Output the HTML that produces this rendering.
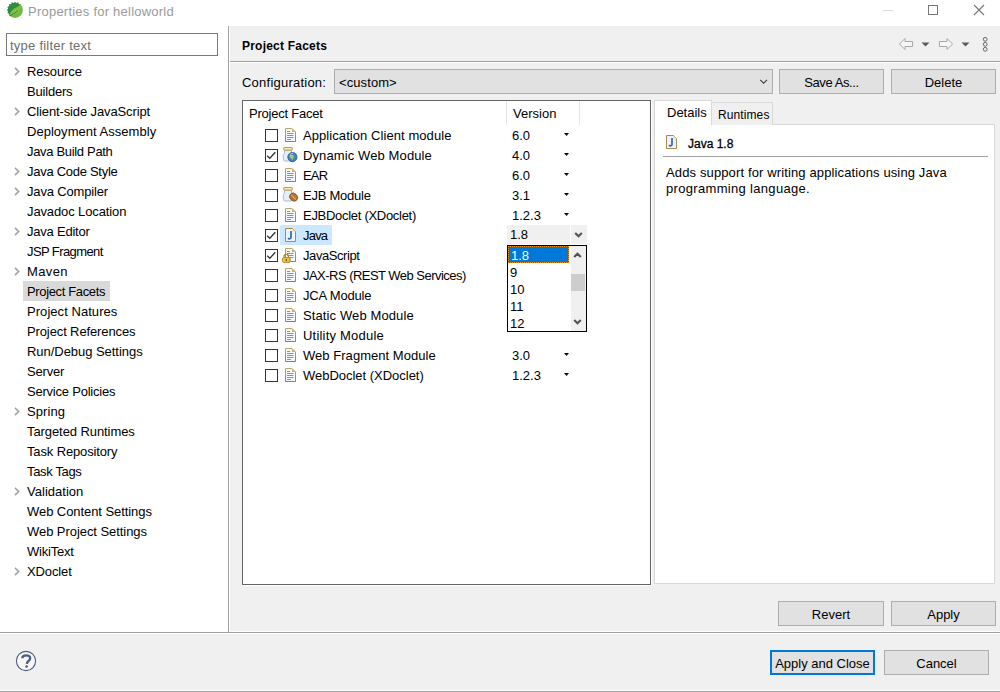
<!DOCTYPE html>
<html><head><meta charset="utf-8">
<style>
*{box-sizing:border-box;margin:0;padding:0}
html,body{width:1000px;height:692px;overflow:hidden;background:#f0f0f0;font-family:"Liberation Sans",sans-serif;color:#000}
.a{position:absolute}
.t{position:absolute;font-size:13px;line-height:16px;white-space:nowrap}
.b{font-weight:bold;font-size:12px}
.btn{position:absolute;background:#e1e1e1;border:1px solid #adadad}
.btn span{position:absolute;left:0;right:0;text-align:center;font-size:13px;line-height:16px;white-space:nowrap}
svg{position:absolute;overflow:visible}
</style></head><body>
<svg width="0" height="0" style="position:absolute"><defs><linearGradient id="docg" x1="0" y1="0" x2="0" y2="1"><stop offset="0" stop-color="#bca66a"/><stop offset="1" stop-color="#6e80ac"/></linearGradient></defs></svg>
<div class="a" style="left:0px;top:0px;width:1000px;height:26px;background:#fff;"></div>
<svg style="left:7px;top:2px" width="16" height="16" viewBox="0 0 16 16">
<circle cx="8" cy="8" r="7.9" fill="#74b843"/>
<path d="M2.4 13.6 A7.9 7.9 0 0 1 13.6 2.4 C11 4.5 9 5.5 7 6.5 C4.8 7.8 3.3 10 2.4 13.6 Z" fill="#2f8c3e"/>
<path d="M3 13.8 C3.5 9.5 7 7 13.8 4.2 C13.5 9 10 13 4 13.6 Z" fill="#7cc24c"/>
<path d="M2.8 13.8 C6 12.2 8.5 11 11 8.3" fill="none" stroke="#2a7a38" stroke-width="0.9"/>
<g fill="#fff"><circle cx="1.20" cy="12.59" r="1.05"/><circle cx="-0.05" cy="9.56" r="1.05"/><circle cx="-0.05" cy="6.44" r="1.05"/><circle cx="1.20" cy="3.41" r="1.05"/><circle cx="3.41" cy="1.20" r="1.05"/><circle cx="6.44" cy="-0.05" r="1.05"/><circle cx="9.56" cy="-0.05" r="1.05"/><circle cx="12.59" cy="1.20" r="1.05"/></g>
</svg>
<div class="t" style="left:28px;top:4px;letter-spacing:0.23px;color:#9a9a9a">Properties for helloworld</div>
<div class="a" style="left:883px;top:10px;width:10px;height:1px;background:#d8d8d8;"></div>
<div class="a" style="left:928px;top:5px;width:10px;height:10px;border:1px solid #767676"></div>
<svg style="left:974px;top:5px" width="10" height="10" viewBox="0 0 10 10"><path d="M0 0L10 10M10 0L0 10" stroke="#767676" stroke-width="1.1"/></svg>
<div class="a" style="left:0px;top:26px;width:228px;height:606px;background:#fff;"></div>
<div class="a" style="left:228px;top:26px;width:1px;height:606px;background:#a0a0a0;"></div>
<div class="a" style="left:229px;top:26px;width:1px;height:606px;background:#fff;"></div>
<div class="a" style="left:6px;top:33px;width:212px;height:23px;border:1px solid #7a7a7a;background:#fff"></div>
<div class="t" style="left:10px;top:38px;letter-spacing:0.24px;color:#6d6d6d">type filter text</div>
<svg style="left:14px;top:67px" width="6" height="10" viewBox="0 0 6 10"><path d="M1 0.9L4.6 4.5L1 8.1" fill="none" stroke="#a6a6a6" stroke-width="1.7"/></svg>
<div class="t" style="left:27px;top:64px;letter-spacing:-0.10px;">Resource</div>
<div class="t" style="left:27px;top:84px;letter-spacing:-0.20px;">Builders</div>
<svg style="left:14px;top:107px" width="6" height="10" viewBox="0 0 6 10"><path d="M1 0.9L4.6 4.5L1 8.1" fill="none" stroke="#a6a6a6" stroke-width="1.7"/></svg>
<div class="t" style="left:27px;top:104px;letter-spacing:-0.12px;">Client-side JavaScript</div>
<div class="t" style="left:27px;top:124px;letter-spacing:0.03px;">Deployment Assembly</div>
<div class="t" style="left:27px;top:144px;letter-spacing:-0.32px;">Java Build Path</div>
<svg style="left:14px;top:167px" width="6" height="10" viewBox="0 0 6 10"><path d="M1 0.9L4.6 4.5L1 8.1" fill="none" stroke="#a6a6a6" stroke-width="1.7"/></svg>
<div class="t" style="left:27px;top:164px;letter-spacing:-0.28px;">Java Code Style</div>
<svg style="left:14px;top:187px" width="6" height="10" viewBox="0 0 6 10"><path d="M1 0.9L4.6 4.5L1 8.1" fill="none" stroke="#a6a6a6" stroke-width="1.7"/></svg>
<div class="t" style="left:27px;top:184px;letter-spacing:-0.17px;">Java Compiler</div>
<div class="t" style="left:27px;top:204px;letter-spacing:-0.12px;">Javadoc Location</div>
<svg style="left:14px;top:227px" width="6" height="10" viewBox="0 0 6 10"><path d="M1 0.9L4.6 4.5L1 8.1" fill="none" stroke="#a6a6a6" stroke-width="1.7"/></svg>
<div class="t" style="left:27px;top:224px;letter-spacing:-0.22px;">Java Editor</div>
<div class="t" style="left:27px;top:244px;letter-spacing:-0.59px;">JSP Fragment</div>
<svg style="left:14px;top:267px" width="6" height="10" viewBox="0 0 6 10"><path d="M1 0.9L4.6 4.5L1 8.1" fill="none" stroke="#a6a6a6" stroke-width="1.7"/></svg>
<div class="t" style="left:27px;top:264px;letter-spacing:0.38px;">Maven</div>
<div class="a" style="left:23px;top:281px;width:87px;height:20px;background:#d9d9d9;"></div>
<div class="t" style="left:27px;top:284px;letter-spacing:-0.36px;">Project Facets</div>
<div class="t" style="left:27px;top:304px;letter-spacing:0.05px;">Project Natures</div>
<div class="t" style="left:27px;top:324px;letter-spacing:-0.12px;">Project References</div>
<div class="t" style="left:27px;top:344px;letter-spacing:-0.04px;">Run/Debug Settings</div>
<div class="t" style="left:27px;top:364px;letter-spacing:-0.18px;">Server</div>
<div class="t" style="left:27px;top:384px;letter-spacing:-0.22px;">Service Policies</div>
<svg style="left:14px;top:407px" width="6" height="10" viewBox="0 0 6 10"><path d="M1 0.9L4.6 4.5L1 8.1" fill="none" stroke="#a6a6a6" stroke-width="1.7"/></svg>
<div class="t" style="left:27px;top:404px;letter-spacing:0.10px;">Spring</div>
<div class="t" style="left:27px;top:424px;letter-spacing:-0.08px;">Targeted Runtimes</div>
<div class="t" style="left:27px;top:444px;letter-spacing:-0.14px;">Task Repository</div>
<div class="t" style="left:27px;top:464px;letter-spacing:-0.34px;">Task Tags</div>
<svg style="left:14px;top:487px" width="6" height="10" viewBox="0 0 6 10"><path d="M1 0.9L4.6 4.5L1 8.1" fill="none" stroke="#a6a6a6" stroke-width="1.7"/></svg>
<div class="t" style="left:27px;top:484px;letter-spacing:0.02px;">Validation</div>
<div class="t" style="left:27px;top:504px;letter-spacing:-0.07px;">Web Content Settings</div>
<div class="t" style="left:27px;top:524px;letter-spacing:-0.06px;">Web Project Settings</div>
<div class="t" style="left:27px;top:544px;letter-spacing:-0.23px;">WikiText</div>
<svg style="left:14px;top:567px" width="6" height="10" viewBox="0 0 6 10"><path d="M1 0.9L4.6 4.5L1 8.1" fill="none" stroke="#a6a6a6" stroke-width="1.7"/></svg>
<div class="t" style="left:27px;top:564px;letter-spacing:-0.12px;">XDoclet</div>
<div class="a" style="left:230px;top:631px;width:770px;height:1px;background:#fff;"></div>
<div class="a" style="left:0px;top:632px;width:1000px;height:1px;background:#a0a0a0;"></div>
<div class="a" style="left:0px;top:633px;width:1000px;height:1px;background:#fff;"></div>
<div class="a" style="left:0px;top:690px;width:1000px;height:1px;background:#fff;"></div>
<div class="a" style="left:0px;top:691px;width:1000px;height:1px;background:#a0a0a0;"></div>
<div class="t b" style="left:242px;top:38px;letter-spacing:0.22px;">Project Facets</div>
<div class="a" style="left:230px;top:61px;width:770px;height:1px;background:#a0a0a0;"></div>
<div class="a" style="left:230px;top:62px;width:770px;height:1px;background:#fff;"></div>
<svg style="left:898px;top:37px" width="16" height="14" viewBox="0 0 16 14">
<path d="M1.5 7 L7 1.5 L7 4.5 L14.5 4.5 L14.5 9.5 L7 9.5 L7 12.5 Z" fill="#f6f6f6" stroke="#a8a8a8" stroke-width="1" stroke-linejoin="round"/></svg>
<svg style="left:921px;top:42px" width="9" height="5" viewBox="0 0 9 5"><path d="M0.5 0.5 L8.5 0.5 L4.5 4.5 Z" fill="#5a5a5a"/></svg>
<svg style="left:938px;top:37px" width="16" height="14" viewBox="0 0 16 14">
<path d="M14.5 7 L9 1.5 L9 4.5 L1.5 4.5 L1.5 9.5 L9 9.5 L9 12.5 Z" fill="#f6f6f6" stroke="#a8a8a8" stroke-width="1" stroke-linejoin="round"/></svg>
<svg style="left:961px;top:42px" width="9" height="5" viewBox="0 0 9 5"><path d="M0.5 0.5 L8.5 0.5 L4.5 4.5 Z" fill="#5a5a5a"/></svg>
<svg style="left:982px;top:37px" width="7" height="15" viewBox="0 0 7 15">
<circle cx="3.2" cy="2.3" r="1.9" fill="none" stroke="#666" stroke-width="1"/>
<circle cx="3.2" cy="7.3" r="1.9" fill="none" stroke="#666" stroke-width="1"/>
<circle cx="3.2" cy="12.3" r="1.9" fill="none" stroke="#666" stroke-width="1"/></svg>
<div class="t" style="left:242px;top:75px;letter-spacing:0.23px;">Configuration:</div>
<div class="a" style="left:334px;top:69px;width:439px;height:25px;background:#e1e1e1;border:1px solid #adadad"></div>
<div class="t" style="left:339px;top:75px;letter-spacing:0.09px;">&lt;custom&gt;</div>
<svg style="left:759px;top:79px" width="10" height="6" viewBox="0 0 10 6"><path d="M1.2 0.8L4.6 4.2L8 0.8" fill="none" stroke="#444" stroke-width="1.2"/></svg>
<div class="btn" style="left:779px;top:69px;width:105px;height:25px;"><span style="top:5px"><span style="position:static;letter-spacing:-0.4px">Save As...</span></span></div>
<div class="btn" style="left:891px;top:69px;width:105px;height:25px;"><span style="top:5px">Delete</span></div>
<div class="a" style="left:242px;top:100px;width:409px;height:485px;background:#fff;border:1px solid #646464"></div>
<div class="a" style="left:651px;top:100px;width:1px;height:486px;background:#fff;"></div>
<div class="a" style="left:242px;top:585px;width:410px;height:1px;background:#fff;"></div>
<div class="t" style="left:249px;top:106px;letter-spacing:-0.23px;">Project Facet</div>
<div class="a" style="left:506px;top:101px;width:1px;height:24px;background:#e5e5e5;"></div>
<div class="a" style="left:579px;top:101px;width:1px;height:24px;background:#e5e5e5;"></div>
<div class="t" style="left:513px;top:106px;">Version</div>
<div class="a" style="left:265px;top:129px;width:13px;height:13px;border:1px solid #333;background:#fff"></div>
<svg style="left:285px;top:128px" width="11" height="14" viewBox="0 0 11 14">
<path d="M0.5 0.5 H7 L10.5 4 V13.5 H0.5 Z" fill="#f5f8fd" stroke="url(#docg)" stroke-width="1"/>
<path d="M7 0.5 L10.5 4 L7 4 Z" fill="#d9ac5c"/>
<path d="M2 3.5H5M2 5.5H8.5M2 7.5H8.5M2 9.5H8.5M2 11.5H6" stroke="#7b92c2" stroke-width="1"/>
</svg>
<div class="t" style="left:303px;top:128px;letter-spacing:0.07px;">Application Client module</div>
<div class="t" style="left:512px;top:128px;">6.0</div>
<svg style="left:564px;top:133px" width="5" height="3" viewBox="0 0 5 3"><path d="M0 0 L5 0 L2.5 3 Z" fill="#000"/></svg>
<div class="a" style="left:265px;top:149px;width:13px;height:13px;border:1px solid #333;background:#fff"></div>
<svg style="left:265px;top:149px" width="13" height="13" viewBox="0 0 13 13"><path d="M2.2 6.8 L4.8 9.3 L10.3 3.3" fill="none" stroke="#333" stroke-width="1.3"/></svg>
<svg style="left:282px;top:146px" width="16" height="17" viewBox="0 0 16 17">
<path d="M2.5 7 C1 7.5 0.8 14 2.5 15 L9.5 15 C11.5 14 11.5 7.5 9.5 7 L9.5 4 L2.5 4 Z" fill="#e6eef8" stroke="#a5b8d4" stroke-width="1"/>
<rect x="1.5" y="1.5" width="9" height="2.6" rx="1.3" fill="#f6ecc0" stroke="#c49a28" stroke-width="1"/>
<circle cx="10.4" cy="11.1" r="4.6" fill="#3a86c8"/><path d="M7.3 9.5 C8.5 8 10 9.5 11 8.8 C12.5 10 11.5 12.5 10.5 14 C9.5 12.5 7.5 11.5 7.3 9.5Z" fill="#a8c860"/><path d="M8 8.2 C9 7.5 10 7.4 11 7.6" stroke="#f0e0d0" stroke-width="1" fill="none"/><circle cx="10.4" cy="11.1" r="4.6" fill="none" stroke="#3058a0" stroke-width="0.9"/></svg>
<div class="t" style="left:303px;top:148px;letter-spacing:0.11px;">Dynamic Web Module</div>
<div class="t" style="left:512px;top:148px;">4.0</div>
<svg style="left:564px;top:153px" width="5" height="3" viewBox="0 0 5 3"><path d="M0 0 L5 0 L2.5 3 Z" fill="#000"/></svg>
<div class="a" style="left:265px;top:169px;width:13px;height:13px;border:1px solid #333;background:#fff"></div>
<svg style="left:285px;top:168px" width="11" height="14" viewBox="0 0 11 14">
<path d="M0.5 0.5 H7 L10.5 4 V13.5 H0.5 Z" fill="#f5f8fd" stroke="url(#docg)" stroke-width="1"/>
<path d="M7 0.5 L10.5 4 L7 4 Z" fill="#d9ac5c"/>
<path d="M2 3.5H5M2 5.5H8.5M2 7.5H8.5M2 9.5H8.5M2 11.5H6" stroke="#7b92c2" stroke-width="1"/>
</svg>
<div class="t" style="left:303px;top:168px;letter-spacing:-0.80px;">EAR</div>
<div class="t" style="left:512px;top:168px;">6.0</div>
<svg style="left:564px;top:173px" width="5" height="3" viewBox="0 0 5 3"><path d="M0 0 L5 0 L2.5 3 Z" fill="#000"/></svg>
<div class="a" style="left:265px;top:189px;width:13px;height:13px;border:1px solid #333;background:#fff"></div>
<svg style="left:282px;top:186px" width="16" height="17" viewBox="0 0 16 17">
<path d="M2.5 7 C1 7.5 0.8 14 2.5 15 L9.5 15 C11.5 14 11.5 7.5 9.5 7 L9.5 4 L2.5 4 Z" fill="#e6eef8" stroke="#a5b8d4" stroke-width="1"/>
<rect x="1.5" y="1.5" width="9" height="2.6" rx="1.3" fill="#f6ecc0" stroke="#c49a28" stroke-width="1"/>
<ellipse cx="11.6" cy="11.1" rx="4.3" ry="3.7" fill="#b8743e" transform="rotate(45 11.6 11.1)"/><path d="M8.8 8.6 L14.3 13.8" stroke="#f0c850" stroke-width="1" fill="none"/><ellipse cx="11.6" cy="11.1" rx="4.3" ry="3.7" fill="none" stroke="#7a4420" stroke-width="0.7" transform="rotate(45 11.6 11.1)"/></svg>
<div class="t" style="left:303px;top:188px;letter-spacing:-0.24px;">EJB Module</div>
<div class="t" style="left:512px;top:188px;">3.1</div>
<svg style="left:564px;top:193px" width="5" height="3" viewBox="0 0 5 3"><path d="M0 0 L5 0 L2.5 3 Z" fill="#000"/></svg>
<div class="a" style="left:265px;top:209px;width:13px;height:13px;border:1px solid #333;background:#fff"></div>
<svg style="left:285px;top:208px" width="11" height="14" viewBox="0 0 11 14">
<path d="M0.5 0.5 H7 L10.5 4 V13.5 H0.5 Z" fill="#f5f8fd" stroke="url(#docg)" stroke-width="1"/>
<path d="M7 0.5 L10.5 4 L7 4 Z" fill="#d9ac5c"/>
<path d="M2 3.5H5M2 5.5H8.5M2 7.5H8.5M2 9.5H8.5M2 11.5H6" stroke="#7b92c2" stroke-width="1"/>
</svg>
<div class="t" style="left:303px;top:208px;letter-spacing:-0.29px;">EJBDoclet (XDoclet)</div>
<div class="t" style="left:512px;top:208px;">1.2.3</div>
<svg style="left:564px;top:213px" width="5" height="3" viewBox="0 0 5 3"><path d="M0 0 L5 0 L2.5 3 Z" fill="#000"/></svg>
<div class="a" style="left:280px;top:225px;width:52px;height:20px;background:#cce8ff;"></div>
<div class="a" style="left:265px;top:229px;width:13px;height:13px;border:1px solid #333;background:#fff"></div>
<svg style="left:265px;top:229px" width="13" height="13" viewBox="0 0 13 13"><path d="M2.2 6.8 L4.8 9.3 L10.3 3.3" fill="none" stroke="#333" stroke-width="1.3"/></svg>
<svg style="left:285px;top:228px" width="11" height="14" viewBox="0 0 11 14">
<path d="M0.5 0.5 H7.5 L10.5 3.5 V13.5 H0.5 Z" fill="#eef3fa" stroke="#a88a4a" stroke-width="1"/>
<path d="M7.5 0.5 L10.5 3.5 L7.5 3.5 Z" fill="#ecd9a8"/>
<path d="M6 3 V9.3 C6 11 4.2 11.3 3 10.2" fill="none" stroke="#2f68b0" stroke-width="1.7"/>
</svg>
<div class="t" style="left:303px;top:228px;letter-spacing:-0.80px;">Java</div>
<div class="a" style="left:265px;top:249px;width:13px;height:13px;border:1px solid #333;background:#fff"></div>
<svg style="left:265px;top:249px" width="13" height="13" viewBox="0 0 13 13"><path d="M2.2 6.8 L4.8 9.3 L10.3 3.3" fill="none" stroke="#333" stroke-width="1.3"/></svg>
<svg style="left:285px;top:248px" width="11" height="14" viewBox="0 0 11 14">
<path d="M0.5 0.5 H7 L10.5 4 V13.5 H0.5 Z" fill="#f5f8fd" stroke="url(#docg)" stroke-width="1"/>
<path d="M7 0.5 L10.5 4 L7 4 Z" fill="#d9ac5c"/>
<path d="M2 3.5H5M2 5.5H8.5M2 7.5H8.5M2 9.5H8.5M2 11.5H6" stroke="#7b92c2" stroke-width="1"/>
</svg>
<svg style="left:282px;top:253px" width="9" height="10" viewBox="0 0 9 10">
<path d="M2 5 L2 3.3 C2 0.8 6.5 0.8 6.5 3.3 L6.5 5" fill="none" stroke="#b09030" stroke-width="1.3"/>
<rect x="0.6" y="4.6" width="7.4" height="4.8" rx="1" fill="#f0c440" stroke="#b48c24" stroke-width="1"/>
<rect x="3.6" y="6.2" width="1.4" height="1.8" fill="#6a5010"/></svg>
<div class="t" style="left:303px;top:248px;letter-spacing:-0.42px;">JavaScript</div>
<div class="a" style="left:265px;top:269px;width:13px;height:13px;border:1px solid #333;background:#fff"></div>
<svg style="left:285px;top:268px" width="11" height="14" viewBox="0 0 11 14">
<path d="M0.5 0.5 H7 L10.5 4 V13.5 H0.5 Z" fill="#f5f8fd" stroke="url(#docg)" stroke-width="1"/>
<path d="M7 0.5 L10.5 4 L7 4 Z" fill="#d9ac5c"/>
<path d="M2 3.5H5M2 5.5H8.5M2 7.5H8.5M2 9.5H8.5M2 11.5H6" stroke="#7b92c2" stroke-width="1"/>
</svg>
<div class="t" style="left:303px;top:268px;letter-spacing:-0.53px;">JAX-RS (REST Web Services)</div>
<div class="a" style="left:265px;top:289px;width:13px;height:13px;border:1px solid #333;background:#fff"></div>
<svg style="left:285px;top:288px" width="11" height="14" viewBox="0 0 11 14">
<path d="M0.5 0.5 H7 L10.5 4 V13.5 H0.5 Z" fill="#f5f8fd" stroke="url(#docg)" stroke-width="1"/>
<path d="M7 0.5 L10.5 4 L7 4 Z" fill="#d9ac5c"/>
<path d="M2 3.5H5M2 5.5H8.5M2 7.5H8.5M2 9.5H8.5M2 11.5H6" stroke="#7b92c2" stroke-width="1"/>
</svg>
<div class="t" style="left:303px;top:288px;letter-spacing:-0.17px;">JCA Module</div>
<div class="a" style="left:265px;top:309px;width:13px;height:13px;border:1px solid #333;background:#fff"></div>
<svg style="left:285px;top:308px" width="11" height="14" viewBox="0 0 11 14">
<path d="M0.5 0.5 H7 L10.5 4 V13.5 H0.5 Z" fill="#f5f8fd" stroke="url(#docg)" stroke-width="1"/>
<path d="M7 0.5 L10.5 4 L7 4 Z" fill="#d9ac5c"/>
<path d="M2 3.5H5M2 5.5H8.5M2 7.5H8.5M2 9.5H8.5M2 11.5H6" stroke="#7b92c2" stroke-width="1"/>
</svg>
<div class="t" style="left:303px;top:308px;letter-spacing:0.11px;">Static Web Module</div>
<div class="a" style="left:265px;top:329px;width:13px;height:13px;border:1px solid #333;background:#fff"></div>
<svg style="left:285px;top:328px" width="11" height="14" viewBox="0 0 11 14">
<path d="M0.5 0.5 H7 L10.5 4 V13.5 H0.5 Z" fill="#f5f8fd" stroke="url(#docg)" stroke-width="1"/>
<path d="M7 0.5 L10.5 4 L7 4 Z" fill="#d9ac5c"/>
<path d="M2 3.5H5M2 5.5H8.5M2 7.5H8.5M2 9.5H8.5M2 11.5H6" stroke="#7b92c2" stroke-width="1"/>
</svg>
<div class="t" style="left:303px;top:328px;letter-spacing:0.21px;">Utility Module</div>
<div class="a" style="left:265px;top:349px;width:13px;height:13px;border:1px solid #333;background:#fff"></div>
<svg style="left:285px;top:348px" width="11" height="14" viewBox="0 0 11 14">
<path d="M0.5 0.5 H7 L10.5 4 V13.5 H0.5 Z" fill="#f5f8fd" stroke="url(#docg)" stroke-width="1"/>
<path d="M7 0.5 L10.5 4 L7 4 Z" fill="#d9ac5c"/>
<path d="M2 3.5H5M2 5.5H8.5M2 7.5H8.5M2 9.5H8.5M2 11.5H6" stroke="#7b92c2" stroke-width="1"/>
</svg>
<div class="t" style="left:303px;top:348px;letter-spacing:0.04px;">Web Fragment Module</div>
<div class="t" style="left:512px;top:348px;">3.0</div>
<svg style="left:564px;top:353px" width="5" height="3" viewBox="0 0 5 3"><path d="M0 0 L5 0 L2.5 3 Z" fill="#000"/></svg>
<div class="a" style="left:265px;top:369px;width:13px;height:13px;border:1px solid #333;background:#fff"></div>
<svg style="left:285px;top:368px" width="11" height="14" viewBox="0 0 11 14">
<path d="M0.5 0.5 H7 L10.5 4 V13.5 H0.5 Z" fill="#f5f8fd" stroke="url(#docg)" stroke-width="1"/>
<path d="M7 0.5 L10.5 4 L7 4 Z" fill="#d9ac5c"/>
<path d="M2 3.5H5M2 5.5H8.5M2 7.5H8.5M2 9.5H8.5M2 11.5H6" stroke="#7b92c2" stroke-width="1"/>
</svg>
<div class="t" style="left:303px;top:368px;letter-spacing:-0.02px;">WebDoclet (XDoclet)</div>
<div class="t" style="left:512px;top:368px;">1.2.3</div>
<svg style="left:564px;top:373px" width="5" height="3" viewBox="0 0 5 3"><path d="M0 0 L5 0 L2.5 3 Z" fill="#000"/></svg>
<div class="a" style="left:507px;top:225px;width:63px;height:19px;background:#f0f0f0;"></div>
<div class="a" style="left:571px;top:225px;width:16px;height:19px;background:#f0f0f0;"></div>
<div class="t" style="left:510px;top:227px;">1.8</div>
<svg style="left:574px;top:232px" width="9" height="6" viewBox="0 0 9 6"><path d="M1.2 1L4.5 4.3L7.8 1" fill="none" stroke="#555" stroke-width="2.2"/></svg>
<div class="a" style="left:507px;top:245px;width:80px;height:87px;background:#fff;border:1px solid #000"></div>
<div class="a" style="left:508px;top:246px;width:61px;height:17px;background:#0078d7;border:1px dotted #f09020"></div>
<div class="a" style="left:571px;top:246px;width:15px;height:85px;background:#f0f0f0;"></div>
<div class="a" style="left:571px;top:274px;width:14px;height:17px;background:#cdcdcd;"></div>
<svg style="left:573px;top:252px" width="9" height="6" viewBox="0 0 9 6"><path d="M1.2 5L4.5 1.7L7.8 5" fill="none" stroke="#555" stroke-width="2.2"/></svg>
<svg style="left:573px;top:319px" width="9" height="6" viewBox="0 0 9 6"><path d="M1.2 1L4.5 4.3L7.8 1" fill="none" stroke="#555" stroke-width="2.2"/></svg>
<div class="t" style="left:511px;top:248px;color:#fff">1.8</div>
<div class="t" style="left:510px;top:265px;">9</div>
<div class="t" style="left:510px;top:282px;">10</div>
<div class="t" style="left:510px;top:299px;">11</div>
<div class="t" style="left:510px;top:316px;">12</div>
<div class="a" style="left:654px;top:124px;width:341px;height:460px;background:#fff;border:1px solid #d9d9d9"></div>
<div class="a" style="left:711px;top:102px;width:62px;height:23px;background:#f0f0f0;border:1px solid #d9d9d9;border-bottom:none"></div>
<div class="a" style="left:654px;top:100px;width:58px;height:25px;background:#fff;border:1px solid #d9d9d9;border-bottom:none"></div>
<div class="t" style="left:667px;top:105px;">Details</div>
<div class="t" style="left:718px;top:107px;font-size:12px;letter-spacing:0.1px">Runtimes</div>
<svg style="left:666px;top:135px" width="11" height="14" viewBox="0 0 11 14">
<path d="M0.5 0.5 H7.5 L10.5 3.5 V13.5 H0.5 Z" fill="#eef3fa" stroke="#a88a4a" stroke-width="1"/>
<path d="M7.5 0.5 L10.5 3.5 L7.5 3.5 Z" fill="#ecd9a8"/>
<path d="M6 3 V9.3 C6 11 4.2 11.3 3 10.2" fill="none" stroke="#2f68b0" stroke-width="1.7"/>
</svg>
<div class="t" style="left:688px;top:136px;font-size:12px;-webkit-text-stroke:0.3px #000;letter-spacing:0px">Java 1.8</div>
<div class="a" style="left:663px;top:156px;width:325px;height:1px;background:#a0a0a0;"></div>
<div class="t" style="left:666px;top:165px;letter-spacing:0.13px;">Adds support for writing applications using Java</div>
<div class="t" style="left:666px;top:181px;letter-spacing:0.32px;">programming language.</div>
<div class="btn" style="left:778px;top:601px;width:106px;height:25px;"><span style="top:5px">Revert</span></div>
<div class="btn" style="left:891px;top:601px;width:105px;height:25px;"><span style="top:5px">Apply</span></div>
<div class="btn" style="left:770px;top:650px;width:105px;height:25px;border:2px solid #0078d7;"><span style="top:4px">Apply and Close</span></div>
<div class="btn" style="left:884px;top:650px;width:105px;height:25px;"><span style="top:5px">Cancel</span></div>
<svg style="left:15px;top:650px" width="22" height="22" viewBox="0 0 22 22">
<circle cx="11" cy="11" r="9.6" fill="#f6f6f6" stroke="#4a5f85" stroke-width="1.1"/>
<path d="M7.3 8.3 C7.3 4.4 15.2 4.4 15.2 8.2 C15.2 10.6 12.1 11 11.8 13.8" fill="none" stroke="#4a5f85" stroke-width="2.3"/>
<circle cx="11.6" cy="16.5" r="1.3" fill="#4a5f85"/>
</svg>
</body></html>
